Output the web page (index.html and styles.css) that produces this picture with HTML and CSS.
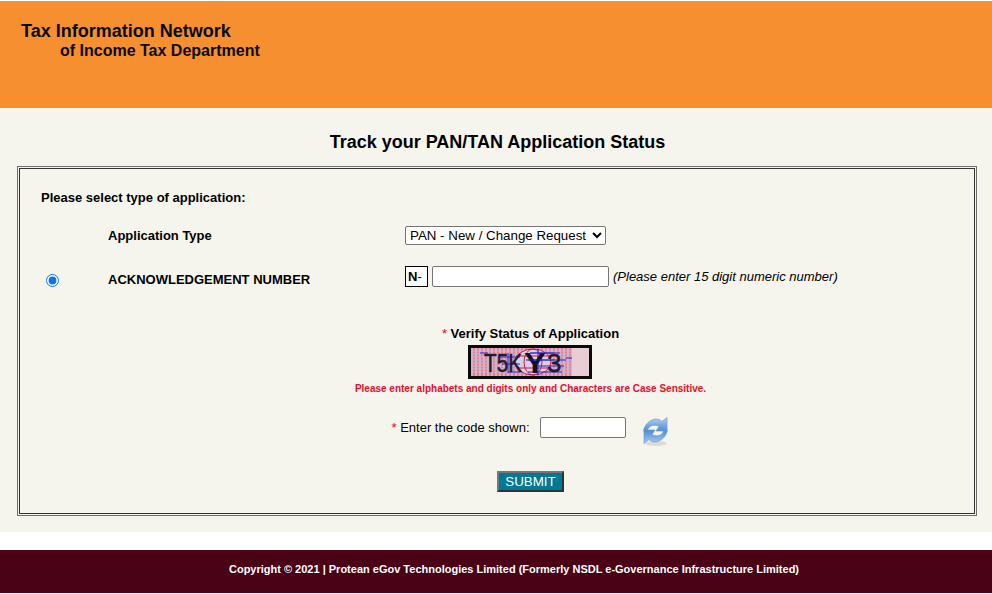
FILE: index.html
```html
<!DOCTYPE html>
<html lang="en">
<head>
<meta charset="utf-8">
<title>Track your PAN/TAN Application Status</title>
<link rel="stylesheet" href="styles.css">
</head>
<body>
<header class="banner">
  <div class="banner-line1">Tax Information Network</div>
  <div class="banner-line2">of Income Tax Department</div>
</header>
<main class="content">
  <h1 class="title">Track your PAN/TAN Application Status</h1>
  <div class="frame-outer">
    <form class="frame-inner">
      <p class="prompt">Please select type of application:</p>
      <div class="row row-type">
        <span class="radio-col"></span>
        <label class="field-label">Application Type</label>
        <select class="type-select"><option>PAN - New / Change Request</option></select>
      </div>
      <div class="row row-ack">
        <span class="radio-col"><input class="radio" type="radio" checked></span>
        <label class="field-label">ACKNOWLEDGEMENT NUMBER</label>
        <div class="ack-field">
          <span class="prefix"><b>N</b>-</span>
          <input class="ack-input" type="text">
          <em class="hint">(Please enter 15 digit numeric number)</em>
        </div>
      </div>
      <div class="verify">
        <div class="verify-title"><span class="star">*</span> <b>Verify Status of Application</b></div>
        <svg class="captcha" width="124" height="34" viewBox="0 0 124 34">
          <rect width="124" height="34" fill="#0b0b0b"/>
          <rect x="3" y="3" width="118" height="28" fill="#e2aeb8"/>
          <g stroke="#d95a6c" stroke-width="1">
            <path d="M6 3v28M10 3v28M14 3v28M18 3v28M22 3v28M26 3v28M30 3v28M34 3v28M38 3v28M42 3v28M46 3v28M50 3v28M54 3v28M58 3v28M62 3v28M66 3v28M70 3v28M74 3v28M78 3v28M82 3v28M86 3v28M90 3v28M94 3v28M98 3v28M102 3v28"/>
          </g>
          <g stroke="#bdb6e4" stroke-width="1">
            <path d="M3 6h118M3 9h118M3 12h118M3 15h118M3 18h118M3 21h118M3 24h118M3 27h118"/>
          </g>
          <path d="M104 3h17v28h-17z" fill="#efd9da" opacity=".7"/>
          <g fill="none" stroke-width="1">
            <ellipse cx="65" cy="17" rx="18" ry="13" fill="#d9cfe6" stroke="#c81f3f"/>
            <ellipse cx="65" cy="17" rx="9" ry="13" stroke="#c81f3f"/>
            <path d="M48 11h34M48 23h34" stroke="#c81f3f"/>
            <path d="M30 12h22M34 19h18M40 27h12M62 8h30M58 15h40M66 21h30M60 27h34M12 8h8M98 13h6" stroke="#2b22d8"/>
            <path d="M70 4v26M40 8v20" stroke="#2b22d8"/>
          </g>
          <text class="captcha-text" transform="translate(16 27) scale(.8 1)">T5K</text>
          <text class="captcha-y" transform="translate(56 27.500) scale(1.100 1)">Y</text>
          <text class="captcha-text" x="79" y="27">3</text>
          <path d="M62 8h24M60 15h26" fill="none" stroke="#2b22d8" stroke-width=".8"/>
        </svg>
        <div class="case-note">Please enter alphabets and digits only and Characters are Case Sensitive.</div>
        <div class="code-row">
          <span class="code-label"><span class="star">*</span> Enter the code shown:</span>
          <input class="code-input" type="text">
          <svg class="refresh" width="26" height="30" viewBox="0 0 26 30">
            <defs>
              <linearGradient id="refreshFill" x1="0" y1="0" x2="0" y2="1">
                <stop offset="0" stop-color="#b6d2f0"/>
                <stop offset="1" stop-color="#4c8cd4"/>
              </linearGradient>
              <linearGradient id="refreshFillLow" x1="0" y1="0" x2="0" y2="1">
                <stop offset="0" stop-color="#4c8cd4"/>
                <stop offset="1" stop-color="#a9c9ee"/>
              </linearGradient>
            </defs>
            <ellipse cx="13" cy="26.500" rx="11" ry="2.500" fill="#dcdcd6"/>
            <path d="M.5 14C1.5 7 8 2 13 2c2.500 0 4.500 1 6 2.500L24 .5V14H13l3-4.500C12 7 6 8 4.500 13z" fill="url(#refreshFill)" stroke="#6c9cd6" stroke-width=".7"/>
            <path d="M24.500 13c-1 7-7.500 12-12.500 12-2.500 0-4.500-1-6-2.500L1 26.500V13h11l-3 4.500c4 2.500 10 1.500 11.500-3.500z" fill="url(#refreshFillLow)" stroke="#6c9cd6" stroke-width=".7"/>
          </svg>
        </div>
        <button class="submit" type="button">SUBMIT</button>
      </div>
    </form>
  </div>
</main>
<footer class="footer">Copyright © 2021 | Protean eGov Technologies Limited (Formerly NSDL e-Governance Infrastructure Limited)</footer>
</body>
</html>
```
FILE: styles.css
```css
html, body {
  margin: 0;
  padding: 0;
  background: #fff;
  overflow: hidden;
}
body {
  padding-top: 1px;
  font-family: "Liberation Sans", Arial, sans-serif;
  color: #000;
  font-size: 13px;
}
.banner {
  height: 107px;
  box-sizing: border-box;
  background: #f68f2f;
  padding: 20px 0 0 21px;
  font-weight: bold;
  color: #0a0a0a;
}
.banner-line1 {
  font-size: 18px;
  line-height: 20px;
}
.banner-line2 {
  font-size: 16px;
  line-height: 19px;
  padding-left: 39px;
}
.content {
  background: #f5f5ed;
  height: 424px;
  box-sizing: border-box;
  padding: 23px 15px 0 17px;
}
.title {
  margin: 0 0 12px;
  padding-left: 1px;
  font-size: 18px;
  line-height: 23px;
  text-align: center;
  font-weight: bold;
}
.frame-outer {
  border: 1px solid #6e6e6e;
  padding: 1px;
  height: 350px;
  box-sizing: border-box;
}
.frame-inner {
  border: 1px solid #333;
  height: 346px;
  box-sizing: border-box;
  padding: 20px 0 0 21px;
}
.prompt {
  margin: 0 0 19px;
  font-weight: bold;
  line-height: 18px;
}
.row {
  display: flex;
  align-items: flex-start;
}
.radio-col {
  width: 67px;
  flex: none;
}
.radio {
  display: block;
  width: 13px;
  height: 13px;
  margin: 0 0 0 5px;
  accent-color: #0a75f0;
}
.field-label {
  width: 297px;
  flex: none;
  font-weight: bold;
  line-height: 18px;
}
.row-type {
  height: 40px;
}
.row-type .field-label {
  margin-top: 1px;
}
.type-select {
  width: 201px;
  height: 19px;
  font-family: "Liberation Sans", Arial, sans-serif;
  font-size: 13.33px;
  background: #fff;
  border: 1px solid #767676;
  border-radius: 2px;
  padding: 0;
  color: #000;
}
.row-ack {
  height: 53px;
}
.row-ack .radio-col {
  padding-top: 8px;
}
.row-ack .field-label {
  margin-top: 5px;
}
.ack-field {
  display: flex;
  align-items: flex-start;
}
.prefix {
  width: 23px;
  height: 21px;
  box-sizing: border-box;
  border: 1px solid #000;
  background: #fff;
  font-size: 13px;
  line-height: 19px;
  padding-left: 2px;
}
.ack-input {
  width: 177px;
  height: 21px;
  box-sizing: border-box;
  margin: 0 0 0 4px;
  border: 1px solid #767676;
  border-radius: 2px;
  background: #fff;
  padding: 0;
}
.hint {
  margin-left: 4px;
  line-height: 22px;
}
.verify {
  display: flex;
  flex-direction: column;
  align-items: center;
  box-sizing: border-box;
  padding-left: 44px;
}
.verify-title {
  line-height: 18px;
  margin: 6px 0 0 2px;
}
.star {
  color: #e0002b;
  font-weight: normal;
}
.captcha {
  display: block;
  margin-top: 2px;
}
.captcha-text {
  font-family: "Liberation Sans", Arial, sans-serif;
  font-size: 26px;
  fill: #241a2e;
  stroke: #241a2e;
  stroke-width: .5px;
}
.captcha-y {
  font-family: "Liberation Sans", Arial, sans-serif;
  font-size: 30px;
  font-weight: bold;
  fill: #15101f;
}
.case-note {
  color: #ee0a2c;
  font-size: 10px;
  font-weight: bold;
  line-height: 12px;
  margin: 4px 0 0 2px;
}
.code-row {
  display: flex;
  align-items: flex-start;
  margin-top: 22px;
  height: 54px;
}
.code-label {
  line-height: 22px;
  margin-left: 1px;
}
.code-input {
  width: 86px;
  height: 21px;
  box-sizing: border-box;
  margin: 0 0 0 10px;
  border: 1px solid #767676;
  border-radius: 2px;
  background: #fff;
  padding: 0;
}
.refresh {
  display: block;
  margin-left: 17px;
}
.submit {
  width: 67px;
  height: 21px;
  box-sizing: border-box;
  margin-left: 2px;
  padding: 0;
  background: #007a94;
  color: #fff;
  font-family: "Liberation Sans", Arial, sans-serif;
  font-size: 13.33px;
  border: 2px solid;
  border-color: #767676 #333 #333 #767676;
}
.footer {
  margin-top: 18px;
  height: 43px;
  box-sizing: border-box;
  background: #4a0216;
  color: #fff;
  font-size: 11px;
  font-weight: bold;
  line-height: 38px;
  text-align: center;
  padding-left: 36px;
}
```
